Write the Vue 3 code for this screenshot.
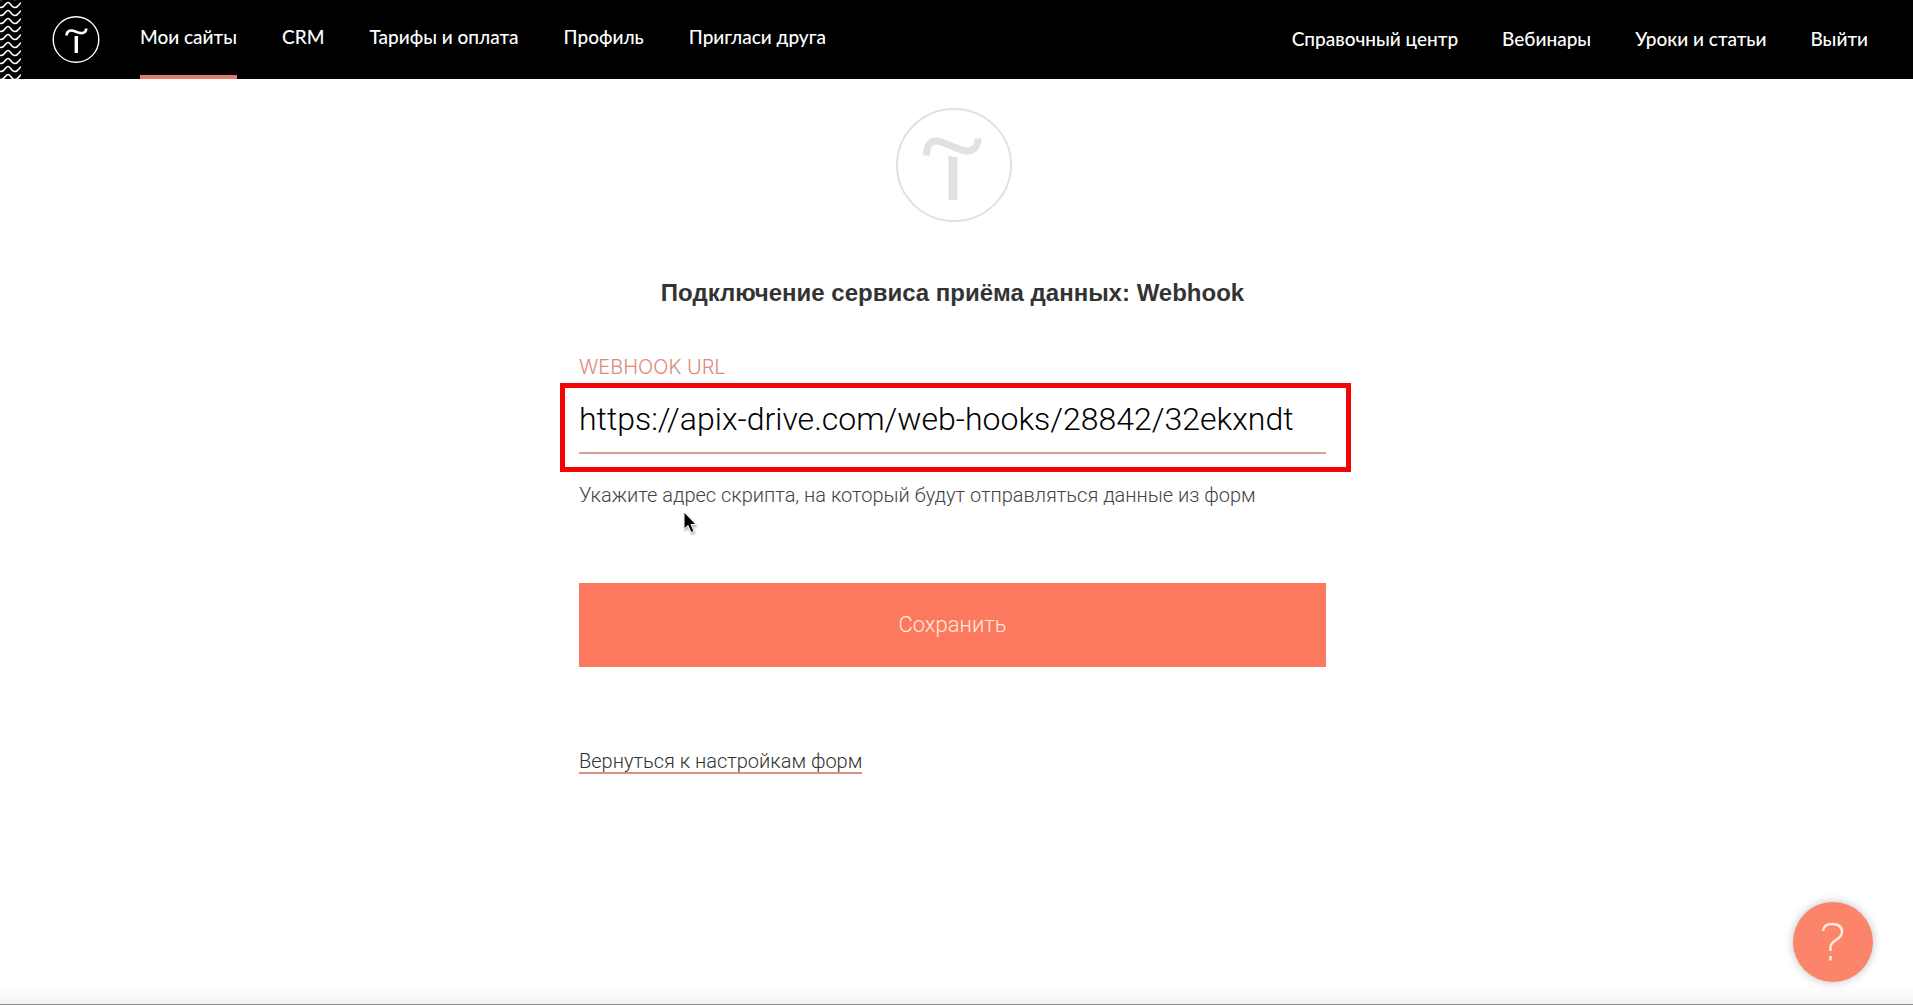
<script setup>
import {ref} from "vue";

const menu = ref([
    {title: 'Мои сайты', active: true},
    {title: 'CRM'},
    {title: 'Тарифы и оплата'},
    {title: 'Профиль'},
    {title: 'Пригласи друга'},
]);
const links = ref(['Справочный центр', 'Вебинары', 'Уроки и статьи', 'Выйти']);
const url = ref('https://apix-drive.com/web-hooks/28842/32ekxndt');
</script>

<template>
    <div class="page">
        <header class="header">
            <svg class="waves" width="21" height="79" aria-hidden="true">
                <defs>
                    <pattern id="wave" x="0" y="1" width="14" height="8" patternUnits="userSpaceOnUse">
                        <path d="M-6 1.500C-3 1.500 -3 6.500 1 6.500S5 1.500 8 1.500S11 6.500 15 6.500S19 1.500 22 1.500" fill="none" stroke="#fff" stroke-width="1.600"/>
                    </pattern>
                </defs>
                <rect width="21" height="79" fill="url(#wave)"/>
            </svg>
            <a class="logo" href="#" aria-label="Tilda">
                <svg width="48" height="48" viewBox="0 0 48 48" fill="none" stroke="#fff">
                    <circle cx="24" cy="23.500" r="22.800" stroke-width="1.400"/>
                    <path d="M14.500 19.500C14.800 13.500 19.500 13.800 24 15.800S34.200 18 34.200 12.500" stroke-width="2.600"/>
                    <path d="M24.300 20V37" stroke-width="3.400"/>
                </svg>
            </a>
            <nav class="menu">
                <a v-for="item in menu" :key="item.title" href="#" :class="{active: item.active}">{{ item.title }}</a>
            </nav>
            <nav class="links">
                <a v-for="link in links" :key="link" href="#">{{ link }}</a>
            </nav>
        </header>

        <main class="content">
            <svg class="emblem" width="118" height="116" viewBox="0 0 118 116" fill="none" stroke="#e1e0e2">
                <ellipse cx="60" cy="58" rx="57" ry="56" stroke-width="2"/>
                <path d="M32.500 48.500C32.500 35 39 31 50 36L65 42C76 46.500 84 43 84 31.500" stroke-width="7"/>
                <path d="M54.500 48Q58 50 63.500 50.500V93H54.500Z" fill="#e1e0e2" stroke="none"/>
            </svg>
            <h1>Подключение сервиса приёма данных: Webhook</h1>
            <form @submit.prevent>
                <label for="webhook">WEBHOOK URL</label>
                <div class="field">
                    <input id="webhook" v-model="url" type="text" spellcheck="false">
                </div>
                <p class="hint">Укажите адрес скрипта, на который будут отправляться данные из форм</p>
                <button class="save" type="submit">Сохранить</button>
            </form>
            <a class="back" href="#">Вернуться к настройкам форм</a>
            <svg class="pointer" width="16" height="26" viewBox="0 0 16 26" aria-hidden="true">
                <path d="M2 2V19L6 15.500L9 22.500L12 21.200L9 14.500H14Z" fill="#000" stroke="#fff" stroke-width="1"/>
            </svg>
        </main>

        <button class="help" type="button" aria-label="Помощь">
            <svg width="24" height="40" viewBox="0 0 24 40" fill="none" stroke="#ffeadb" stroke-width="2.500">
                <path d="M2 9C2.500 4 6 2 11 2C17 2 21 4.500 21 10C21 18 9.500 18 9.500 25V29"/>
                <path d="M9.500 34V38.500"/>
            </svg>
        </button>
        <div class="shade"></div>
    </div>
</template>

<style>
body {
    background: #fff;
}
</style>

<style scoped>
.page {
    min-height: 100vh;
    font-family: Roboto, "Liberation Sans", sans-serif;
    font-weight: 300;
    color: #333;
}

.page a {
    color: inherit;
    text-decoration: none;
}

.header {
    display: flex;
    height: 79px;
    background: #000;
    color: #fff;
    font: 500 19px/24px Lato, sans-serif;
}

.waves {
    flex: none;
}

.logo {
    display: flex;
    align-items: center;
    margin: 0 40px 0 31px;
}

.menu,
.links {
    display: flex;
    gap: 45px;
    white-space: nowrap;
}

.menu a {
    padding: 25px 0 26px;
}

.menu a.active {
    border-bottom: 4px solid #e07c70;
}

.links {
    gap: 44px;
    margin-left: auto;
    padding: 27px 45px 0 0;
}

.content {
    position: relative;
    width: 747px;
    max-width: calc(100% - 48px);
    margin: 0 auto;
    padding: 28px 8px 0 0;
}

.emblem {
    display: block;
    margin: 0 auto;
}

h1 {
    margin: 55px 0 0;
    font-family: "Liberation Sans", sans-serif;
    font-weight: 700;
    font-size: 24px;
    line-height: 30px;
    text-align: center;
}

label {
    display: block;
    margin-top: 47px;
    font-family: Inter, sans-serif;
    font-size: 20px;
    line-height: 24px;
    color: #dd8a7c;
}

.field {
    position: relative;
    margin-top: 12px;
}

/* red highlight around the address */
.field::after {
    content: "";
    position: absolute;
    inset: -8px -25px -18px -19px;
    border: 5px solid #f40404;
    pointer-events: none;
}

input {
    display: block;
    box-sizing: border-box;
    width: 100%;
    height: 63px;
    padding: 0 0 6px;
    border: 0;
    border-bottom: 2px solid #d7a097;
    background: none;
    font: inherit;
    font-size: 32px;
    color: #000;
    outline: none;
}

.hint {
    margin: 29px 0 0;
    font-size: 20px;
    line-height: 24px;
    color: #444;
}

.save {
    display: block;
    width: 100%;
    height: 84px;
    margin-top: 76px;
    padding: 0 0 2px;
    border: 0;
    background: #fc795f;
    font: inherit;
    font-size: 22px;
    color: #ffeadb;
}

.page .back {
    display: inline-block;
    margin-top: 83px;
    border-bottom: 2px solid #d9907f;
    font-size: 20px;
    line-height: 22px;
}

.pointer {
    position: absolute;
    left: 103px;
    top: 431px;
    filter: drop-shadow(1px 2px 1px rgba(0, 0, 0, .3));
}

.help {
    position: fixed;
    right: 40px;
    bottom: 23px;
    display: flex;
    align-items: center;
    justify-content: center;
    width: 80px;
    height: 80px;
    padding: 0;
    border: 0;
    border-radius: 50%;
    background: #fc846b;
    box-shadow: 0 0 10px rgba(0, 0, 0, .25);
    z-index: 2;
}

.shade {
    position: fixed;
    left: 0;
    right: 0;
    bottom: 0;
    height: 18px;
    border-bottom: 1px solid #8c8c8c;
    background: linear-gradient(#fff, #f3f3f3);
}
</style>
